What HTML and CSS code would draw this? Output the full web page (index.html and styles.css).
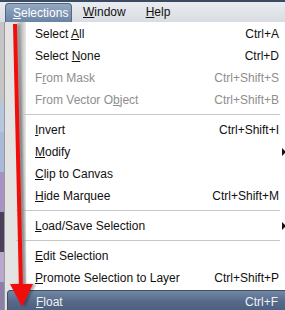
FILE: index.html
```html
<!DOCTYPE html>
<html lang="en">
<head>
    <meta charset="UTF-8">
    <title>Selections menu</title>
    <link rel="stylesheet" href="styles.css">
</head>
<body>
<div class="menubar">
    <span class="top-item active"><u>S</u>elections</span>
    <span class="top-item"><u>W</u>indow</span>
    <span class="top-item"><u>H</u>elp</span>
</div>

<div class="workspace">
    <div class="backdrop"></div>
    <ul class="menu">
        <li class="item"><span class="label">Select <u>A</u>ll</span><span class="key">Ctrl+A</span></li>
        <li class="item"><span class="label">Select <u>N</u>one</span><span class="key">Ctrl+D</span></li>
        <li class="item disabled"><span class="label">F<u>r</u>om Mask</span><span class="key">Ctrl+Shift+S</span></li>
        <li class="item disabled"><span class="label">From Vector O<u>b</u>ject</span><span class="key">Ctrl+Shift+B</span></li>
        <li class="sep"></li>
        <li class="item"><span class="label"><u>I</u>nvert</span><span class="key">Ctrl+Shift+I</span></li>
        <li class="item sub"><span class="label"><u>M</u>odify</span><span class="key"></span></li>
        <li class="item"><span class="label"><u>C</u>lip to Canvas</span><span class="key"></span></li>
        <li class="item"><span class="label"><u>H</u>ide Marquee</span><span class="key">Ctrl+Shift+M</span></li>
        <li class="sep"></li>
        <li class="item sub"><span class="label"><u>L</u>oad/Save Selection</span><span class="key"></span></li>
        <li class="sep"></li>
        <li class="item"><span class="label"><u>E</u>dit Selection</span><span class="key"></span></li>
        <li class="item"><span class="label"><u>P</u>romote Selection to Layer</span><span class="key">Ctrl+Shift+P</span></li>
        <li class="item hot"><span class="label"><u>F</u>loat</span><span class="key">Ctrl+F</span></li>
    </ul>

    <!-- red annotation arrow drawn over the menu -->
    <svg class="arrow" width="40" height="290" viewBox="0 0 40 290">
        <line x1="15" y1="2" x2="21" y2="266" stroke="#f20d0d" stroke-width="4"/>
        <polygon points="10,262 33,262 22,285" fill="#f20d0d"/>
    </svg>
</div>
</body>
</html>
```

FILE: styles.css
```css
body {
    margin: 0;
    width: 285px;
    height: 310px;
    overflow: hidden;
    font-family: "Liberation Sans", Arial, sans-serif;
    font-size: 12px;
    color: #111;
    background: #c9c9c9;
}

.menubar {
    height: 20px;
    border-top: 2px solid #3a4b62;
    background: linear-gradient(#e9ecf0, #d9dde3);
    display: flex;
    align-items: flex-end;
    padding-left: 5px;
}

.top-item {
    height: 19px;
    line-height: 18px;
    padding: 0 7px;
    margin-right: 4px;
    box-sizing: border-box;
}

.top-item:nth-child(2) {
    margin-right: 6px;
}

.active {
    width: 67px;
    margin-right: 4px;
    color: #fff;
    background: linear-gradient(#93a8c2, #6b84a4);
    border: 1px solid #51667f;
    border-bottom: none;
    border-radius: 4px 4px 0 0;
}

.workspace {
    position: relative;
    display: flex;
    height: 288px;
}

.backdrop {
    width: 4px;
    flex: none;
    background: linear-gradient(#c5c5c5 0 80px, #b6c6dc 80px 110px, #a9b9d6 110px 150px, #a693c4 150px 190px, #4b3f5a 190px 230px, #b8a9cc 230px 260px, #8c7fa8 260px);
}

.menu {
    list-style: none;
    margin: 0;
    padding: 1px 0 0 0;
    width: 290px;
    flex: none;
    border-left: 1px solid #9a9a9a;
    background: linear-gradient(to right, #e3e3e3 0 12px, #bcbcbc 16px, #e6e6e6 21px, #fff 21px);
}

.item {
    height: 22px;
    display: flex;
    align-items: center;
    padding: 0 9px 0 30px;
}

.label {
    flex: 1;
}

.key {
    text-align: right;
}

.item::after {
    content: "";
    width: 0;
    height: 0;
    margin-left: 3px;
    border: 4px solid transparent;
    border-right: none;
    border-left-width: 4px;
}

.sub::after {
    border-left-color: #111;
}

.disabled {
    color: #8e8e8e;
}

.sep {
    height: 8px;
    margin-left: 11px;
    margin-right: 15px;
    background: linear-gradient(transparent 3px, #c6c6c6 3px 4px, transparent 4px);
}

.hot {
    margin-left: 2px;
    padding-left: 28px;
    height: 21px;
    margin-top: 1px;
    color: #eef2f7;
    background: linear-gradient(#7388a4, #56698a 50%, #4b5e7c);
    border: 1px solid #3d4e66;
    border-radius: 3px;
}

.arrow {
    position: absolute;
    left: 0;
    top: 0;
    filter: drop-shadow(3px 0 1px rgba(0, 0, 0, 0.3));
}
```
